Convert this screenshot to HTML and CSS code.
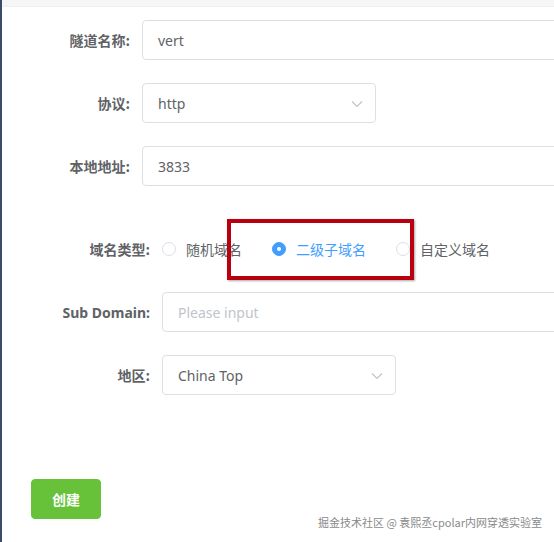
FILE: index.html
```html
<!DOCTYPE html>
<html lang="zh-CN">
<head>
<meta charset="utf-8">
<title>创建隧道</title>
<link rel="stylesheet" href="styles.css">
</head>
<body>
<div class="page">
  <div class="topband"></div>
  <div class="content">
    <form class="form form-a">
      <div class="item">
        <label class="label">隧道名称:</label>
        <div class="input wide"><span class="val">vert</span></div>
      </div>
      <div class="item">
        <label class="label">协议:</label>
        <div class="input select"><span class="val">http</span>
          <svg class="arrow" width="12" height="8" viewBox="0 0 12 8"><path d="M1 1.5 L6 6.5 L11 1.5" fill="none" stroke="#c0c4cc" stroke-width="1.2"/></svg>
        </div>
      </div>
      <div class="item">
        <label class="label">本地地址:</label>
        <div class="input wide"><span class="val">3833</span></div>
      </div>
    </form>

    <form class="form form-b">
      <div class="item radio-item">
        <label class="label">域名类型:</label>
        <div class="radios">
          <span class="radio"><span class="dot"></span><span class="rtext">随机域名</span></span>
          <span class="radio checked"><span class="dot"></span><span class="rtext">二级子域名</span></span>
          <span class="radio"><span class="dot"></span><span class="rtext">自定义域名</span></span>
        </div>
      </div>
      <div class="item">
        <label class="label latin">Sub Domain:</label>
        <div class="input wide"><span class="ph">Please input</span></div>
      </div>
      <div class="item last">
        <label class="label">地区:</label>
        <div class="input select"><span class="val">China Top</span>
          <svg class="arrow" width="12" height="8" viewBox="0 0 12 8"><path d="M1 1.5 L6 6.5 L11 1.5" fill="none" stroke="#c0c4cc" stroke-width="1.2"/></svg>
        </div>
      </div>
    </form>

    <div class="actions">
      <button class="btn" type="button">创建</button>
    </div>
  </div>
  <div class="highlight"></div>
  <div class="watermark">掘金技术社区 @ 袁熙丞cpolar内网穿透实验室</div>
</div>
</body>
</html>
```

FILE: styles.css
```css
html, body {
  margin: 0;
  padding: 0;
  background: #fff;
  overflow: hidden;
}
body {
  font-family: "Noto Sans", "Noto Sans CJK SC", sans-serif;
  font-size: 14px;
  color: #606266;
}
.page {
  position: relative;
  width: 554px;
  height: 542px;
  border-left: 2px solid #3c4a6c;
  box-sizing: border-box;
  overflow: hidden;
}
.topband {
  height: 6px;
  background: #f5f6f7;
  border-bottom: 1px solid #f0f0f0;
}
.content {
  padding-top: 13px;
}
.form {
  margin: 0;
}
.form-b {
  margin-top: 43px;
}
.item {
  display: flex;
  align-items: center;
  height: 40px;
  margin-bottom: 23px;
}
.form-a .item:last-child { margin-bottom: 0; }
.item.last { margin-bottom: 0; }
.label {
  flex: none;
  box-sizing: border-box;
  text-align: right;
  padding-right: 12px;
  font-family: "Noto Sans CJK SC", sans-serif;
  font-weight: bold;
  color: #606266;
  font-size: 14px;
}
.label.latin {
  font-family: "Noto Sans", "Noto Sans CJK SC", sans-serif;
}
.form-a .label { width: 140px; }
.form-b .label { width: 160px; }
.input {
  position: relative;
  flex: none;
  box-sizing: border-box;
  height: 40px;
  border: 1px solid #dcdfe6;
  border-radius: 4px;
  padding: 0 15px;
  display: flex;
  align-items: center;
  background: #fff;
}
.input.wide { width: 460px; }
.input.select { width: 234px; }
.val { color: #606266; }
.ph { color: #c0c4cc; }
.arrow {
  position: absolute;
  right: 12px;
  top: 16px;
}
.radios {
  display: flex;
  align-items: center;
}
.radio {
  display: inline-flex;
  align-items: center;
  margin-right: 30px;
  font-family: "Noto Sans CJK SC", sans-serif;
  color: #606266;
}
.dot {
  width: 14px;
  height: 14px;
  box-sizing: border-box;
  border: 1px solid #dcdfe6;
  border-radius: 50%;
  margin-right: 10px;
  position: relative;
  background: #fff;
}
.radio.checked .dot {
  border-color: #409eff;
  background: #409eff;
}
.radio.checked .dot::after {
  content: "";
  position: absolute;
  width: 4px;
  height: 4px;
  border-radius: 50%;
  background: #fff;
  left: 4px;
  top: 4px;
}
.radio.checked .rtext { color: #409eff; }
.actions {
  margin-top: 84px;
  padding-left: 29px;
}
.btn {
  width: 70px;
  height: 40px;
  border: 1px solid #67c23a;
  border-radius: 4px;
  background: #67c23a;
  color: #fff;
  font-family: "Noto Sans CJK SC", sans-serif;
  font-weight: bold;
  font-size: 14px;
  padding: 0;
}
.highlight {
  position: absolute;
  left: 225px;
  top: 219px;
  width: 187px;
  height: 61px;
  box-sizing: border-box;
  border: 4px solid #b8000e;
  box-shadow: 1px 1px 2px rgba(0,0,0,0.35);
}
.watermark {
  position: absolute;
  right: 12px;
  top: 514px;
  font-family: "Noto Sans CJK SC", sans-serif;
  font-size: 11px;
  color: #8a8a8a;
  text-shadow: 0 0 1px #fff;
  white-space: nowrap;
}
```
